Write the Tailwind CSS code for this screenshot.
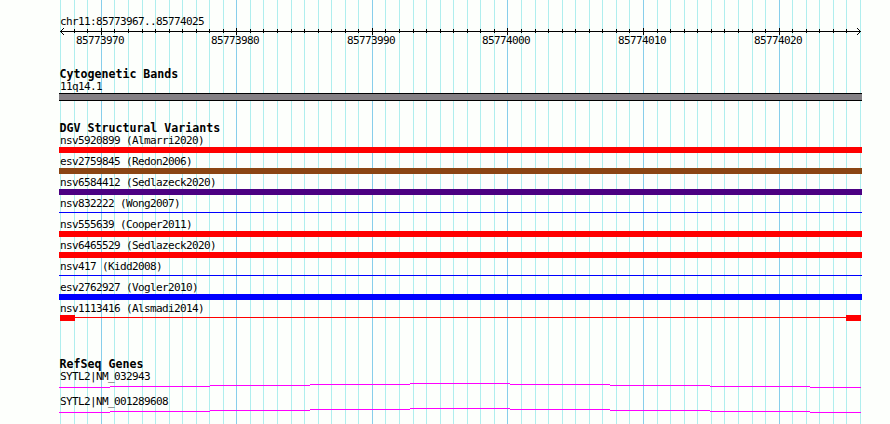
<!DOCTYPE html>
<html lang="en"><head><meta charset="utf-8"><title>chr11:85773967..85774025</title>
<script src="https://cdn.jsdelivr.net/npm/@tailwindcss/browser@4"></script></head>
<body class="bg-[#fdfffc]">
<div class="relative w-[890px] h-[424px] overflow-hidden text-black font-['DejaVu_Sans_Mono',monospace] text-[11px] tracking-[-0.622px] whitespace-nowrap">
<svg class="absolute inset-0" width="890" height="424" shape-rendering="crispEdges" fill="none">
<path id="minor" stroke="#afeeee"/><path id="major" stroke="#87ceeb"/></svg>
<main class="relative flex flex-col pl-[59px]">
<div class="h-[13px]"></div>
<div class="h-[14px] leading-[18px] pl-px">chr11:85773967..85774025</div>
<svg class="h-[8px] w-[803px]" viewBox="59 27 803 8" shape-rendering="crispEdges" fill="none" stroke="#000"><path id="ticks"/><path d="M60 31.5H861"/><path shape-rendering="auto" d="M64 28L60.5 31.5L64 35M857 28L860.5 31.5L857 35"/></svg>
<div class="flex h-[31px] leading-[12px] pl-[17px]"><span class="w-[135px]">85773970</span><span class="w-[136px]">85773980</span><span class="w-[135px]">85773990</span><span class="w-[136px]">85774000</span><span class="w-[136px]">85774010</span><span>85774020</span></div>
<h2 class="h-[14px] leading-[16px] pl-[0.5px] font-bold text-[11.627px] tracking-normal">Cytogenetic Bands</h2>
<div class="h-[13px] leading-[13px] pl-px">11q14.1</div>
<div class="h-[8px] w-[803px] border-y border-black bg-[#848084]"></div>
<div class="h-[19px]"></div>
<h2 class="h-[14px] leading-[16px] pl-[0.5px] font-bold text-[11.627px] tracking-normal">DGV Structural Variants</h2>
<section class="w-[803px]">
<div class="h-[21px]"><p class="h-[13px] leading-[13px] pl-px">nsv5920899 (Almarri2020)</p><div class="h-[6px] bg-[#f00]"></div></div>
<div class="h-[21px]"><p class="h-[13px] leading-[13px] pl-px">esv2759845 (Redon2006)</p><div class="h-[6px] bg-[#8b4513]"></div></div>
<div class="h-[21px]"><p class="h-[13px] leading-[13px] pl-px">nsv6584412 (Sedlazeck2020)</p><div class="h-[6px] bg-[#4b0082]"></div></div>
<div class="h-[21px]"><p class="h-[15px] leading-[13px] pl-px">nsv832222 (Wong2007)</p><div class="h-px bg-[#00f]"></div></div>
<div class="h-[21px]"><p class="h-[13px] leading-[13px] pl-px">nsv555639 (Cooper2011)</p><div class="h-[6px] bg-[#f00]"></div></div>
<div class="h-[21px]"><p class="h-[13px] leading-[13px] pl-px">nsv6465529 (Sedlazeck2020)</p><div class="h-[6px] bg-[#f00]"></div></div>
<div class="h-[21px]"><p class="h-[15px] leading-[13px] pl-px">nsv417 (Kidd2008)</p><div class="h-px bg-[#00f]"></div></div>
<div class="h-[21px]"><p class="h-[13px] leading-[13px] pl-px">esv2762927 (Vogler2010)</p><div class="h-[6px] bg-[#00f]"></div></div>
<div class="h-[21px]"><p class="h-[13px] leading-[13px] pl-px">nsv1113416 (Alsmadi2014)</p><div class="flex h-[6px] px-px"><i class="w-[15px] bg-[#f00]"></i><i class="flex-1 mt-[2px] h-px bg-[#f00]"></i><i class="w-[15px] bg-[#f00]"></i></div></div>
</section>
<div class="h-[33px]"></div>
<h2 class="h-[14px] leading-[16px] pl-[0.5px] font-bold text-[11.627px] tracking-normal">RefSeq Genes</h2>
<div class="h-[25px]"><p class="h-[13px] leading-[13px] pl-px">SYTL2|NM_032943</p><svg class="w-[802px] h-[5px]" shape-rendering="crispEdges" fill="none" stroke="#f0f"><path d="M0 4.5H51M51 3.5H151M151 2.5H251M251 1.5H351M351 .5H451M451 1.5H551M551 2.5H651M651 3.5H751M751 4.5H802"/></svg></div>
<div class="h-[25px]"><p class="h-[13px] leading-[13px] pl-px">SYTL2|NM_001289608</p><svg class="w-[802px] h-[5px]" shape-rendering="crispEdges" fill="none" stroke="#f0f"><path d="M0 4.5H51M51 3.5H151M151 2.5H251M251 1.5H351M351 .5H451M451 1.5H551M551 2.5H651M651 3.5H751M751 4.5H802"/></svg></div>
</main></div>
<script>
const xs=[60,74,87,101,114,128,142,155,169,182,196,209,223,236,250,263,277,291,304,318,331,345,358,372,385,399,413,426,440,453,467,480,494,507,521,535,548,562,575,589,602,616,629,643,657,670,684,697,711,724,738,752,765,779,792,806,819,833,846,860];
const isMajor=i=>i%10===3;
const lines=(keep,y,h)=>xs.map((x,i)=>keep(i)?`M${x+.5} ${y}v${h}`:'').join('');
document.getElementById('minor').setAttribute('d',lines(i=>!isMajor(i),0,424));
document.getElementById('major').setAttribute('d',lines(isMajor,0,424));
document.getElementById('ticks').setAttribute('d',lines(i=>!isMajor(i)&&i>0&&i<59,29,4)+lines(isMajor,28,7));
</script></body></html>
